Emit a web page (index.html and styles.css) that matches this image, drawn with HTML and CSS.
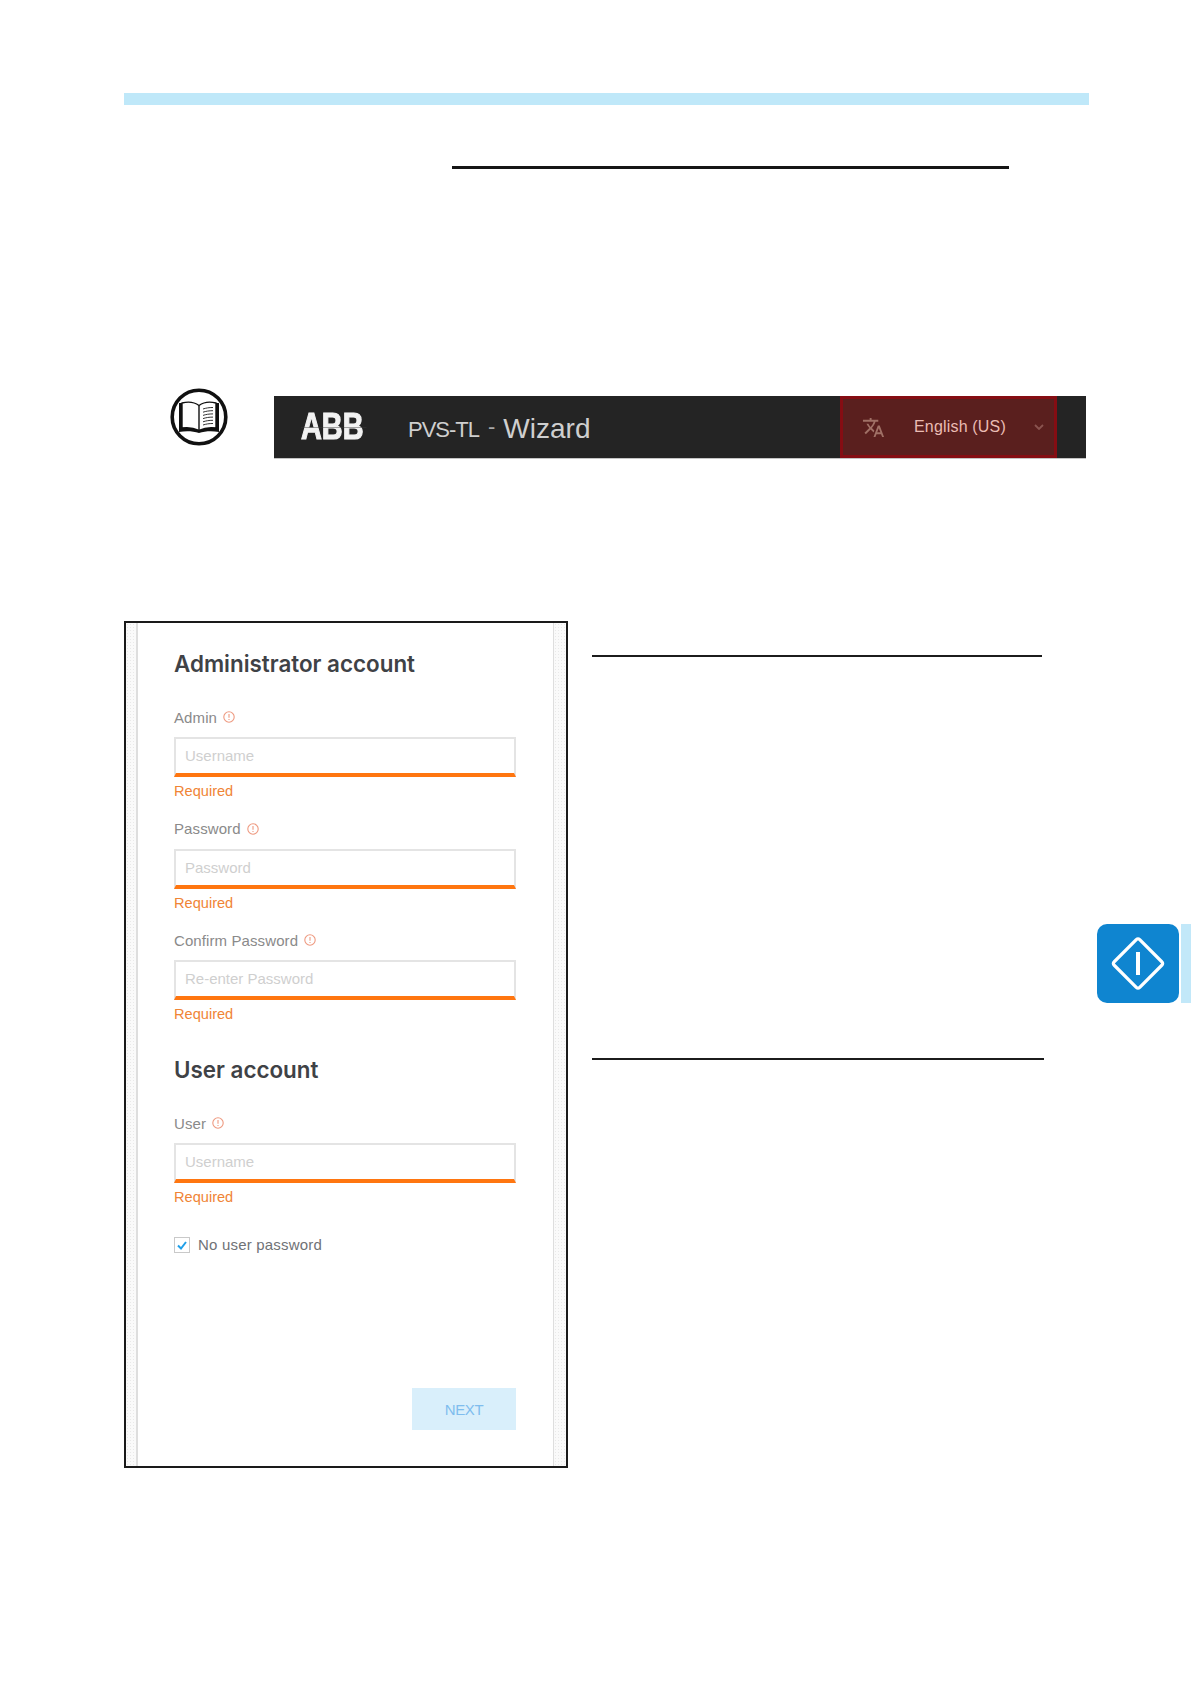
FILE: index.html
```html
<!DOCTYPE html>
<html lang="en">
<head>
<meta charset="utf-8">
<title>PVS-TL Wizard</title>
<link rel="stylesheet" href="styles.css">
</head>
<body>
<div class="band"></div>
<div class="title-rule"></div>

<div class="note-row">
  <svg class="book" viewBox="0 0 58 58" aria-hidden="true">
    <circle cx="29" cy="29" r="26.800" fill="#fff" stroke="#111" stroke-width="3.600"/>
    <g transform="translate(-1 0)">
      <path d="M10 15h3v25c6-1 12 0 17 2.500 5-2.500 11-3.500 17-2.500V15h3v29c-7-1.500-14-1-20 1-6-2-13-2.500-20-1z" fill="#111"/>
      <path d="M13 15c6-1.500 13-.5 17 2.500 4-3 11-4 17-2.500v25c-6-1-12 0-17 2.500-5-2.500-11-3.500-17-2.500z" fill="#fff" stroke="#111" stroke-width="1.400"/>
      <path d="M30 17.500v25" stroke="#111" stroke-width="1.400"/>
      <path d="M34 21c3-1 6-1.500 10-1.500M34 24.200c3-1 6-1.500 10-1.500M34 27.400c3-1 6-1.500 10-1.500M34 30.600c3-1 6-1.500 10-1.500M34 33.800c3-1 6-1.500 10-1.500M34 37c3-1 6-1.500 10-1.500" fill="none" stroke="#333" stroke-width="1"/>
    </g>
  </svg>
  <header class="topbar">
    <span class="logo">ABB</span>
    <span class="product">PVS-TL</span>
    <span class="dash">-</span>
    <span class="wizard">Wizard</span>
    <div class="lang">
      <svg class="lang-icon" viewBox="0 0 24 24" aria-hidden="true"><path d="M12.870 15.070l-2.540-2.510.03-.03c1.740-1.940 2.980-4.170 3.710-6.530H17V4h-7V2H8v2H1v1.990h11.170C11.500 7.920 10.440 9.750 9 11.350 8.070 10.320 7.300 9.190 6.690 8h-2c.73 1.630 1.730 3.170 2.980 4.560l-5.090 5.020L4 19l5-5 3.110 3.110.76-2.040zM18.500 10h-2L12 22h2l1.120-3h4.750L21 22h2l-4.500-12zm-2.620 7l1.620-4.330L19.120 17h-3.240z"/></svg>
      <span class="lang-name">English (US)</span>
      <svg class="lang-caret" viewBox="0 0 10 6" aria-hidden="true"><path d="M1 1l4 4 4-4" fill="none" stroke="#8a5450" stroke-width="1.800"/></svg>
    </div>
  </header>
</div>

<main class="content">
  <section class="card">
    <div class="strip strip-left"></div>
    <form class="panel">
      <h2 class="heading">Administrator account</h2>

      <div class="field">
        <div class="label">Admin <svg class="info" viewBox="0 0 12 12" aria-hidden="true"><circle cx="6" cy="6" r="5.200" fill="none" stroke="#ee9a80" stroke-width="1.100"/><path d="M6 3v3.700M6 8v1" stroke="#ee9a80" stroke-width="1.100"/></svg></div>
        <input class="input" type="text" placeholder="Username">
        <div class="error">Required</div>
      </div>

      <div class="field">
        <div class="label">Password <svg class="info" viewBox="0 0 12 12" aria-hidden="true"><circle cx="6" cy="6" r="5.200" fill="none" stroke="#ee9a80" stroke-width="1.100"/><path d="M6 3v3.700M6 8v1" stroke="#ee9a80" stroke-width="1.100"/></svg></div>
        <input class="input" type="text" placeholder="Password">
        <div class="error">Required</div>
      </div>

      <div class="field">
        <div class="label">Confirm Password <svg class="info" viewBox="0 0 12 12" aria-hidden="true"><circle cx="6" cy="6" r="5.200" fill="none" stroke="#ee9a80" stroke-width="1.100"/><path d="M6 3v3.700M6 8v1" stroke="#ee9a80" stroke-width="1.100"/></svg></div>
        <input class="input" type="text" placeholder="Re-enter Password">
        <div class="error">Required</div>
      </div>

      <h2 class="heading heading-second">User account</h2>

      <div class="field">
        <div class="label">User <svg class="info" viewBox="0 0 12 12" aria-hidden="true"><circle cx="6" cy="6" r="5.200" fill="none" stroke="#ee9a80" stroke-width="1.100"/><path d="M6 3v3.700M6 8v1" stroke="#ee9a80" stroke-width="1.100"/></svg></div>
        <input class="input" type="text" placeholder="Username">
        <div class="error">Required</div>
      </div>

      <div class="check-row">
        <span class="checkbox"><svg viewBox="0 0 14 14" aria-hidden="true"><path d="M3 7.500l3 3 5-6.500" fill="none" stroke="#1f9fe8" stroke-width="2"/></svg></span>
        <span class="check-label">No user password</span>
      </div>

      <button class="next" type="button">NEXT</button>
    </form>
    <div class="strip"></div>
  </section>

  <aside class="side">
    <div class="side-rule"></div>
    <div class="tab">
      <div class="tile">
        <svg viewBox="0 0 82 79" aria-hidden="true">
          <path d="M39.500 15.500a2 2 0 0 1 3 0L65 38a2 2 0 0 1 0 3L42.500 63.500a2 2 0 0 1-3 0L17 41a2 2 0 0 1 0-3z" fill="none" stroke="#fff" stroke-width="3.200"/>
          <rect x="39" y="28" width="4" height="23" fill="#fff"/>
        </svg>
      </div>
      <div class="tab-edge"></div>
    </div>
    <div class="side-rule side-rule-second"></div>
  </aside>
</main>
</body>
</html>
```
FILE: styles.css
```css
* { box-sizing: border-box; }

html, body { margin: 0; padding: 0; }

body {
  min-height: 1684px;
  padding-top: 93px;
  background: #fff;
  font-family: "Liberation Sans", Arial, sans-serif;
  overflow-x: hidden;
}

.band {
  height: 12px;
  margin: 0 102px 0 124px;
  background: #bfe8f9;
}

.title-rule {
  width: 557px;
  height: 3px;
  margin: 61px 0 0 452px;
  background: #151515;
}

.note-row {
  display: flex;
  align-items: flex-start;
  gap: 46px;
  margin-top: 219px;
  padding-left: 170px;
}

.book {
  flex: none;
  width: 58px;
  height: 58px;
}

.topbar {
  display: flex;
  align-items: center;
  width: 812px;
  height: 63px;
  margin-top: 8px;
  padding-left: 27px;
  background: #242424;
  border-bottom: 1px solid #c4c4c4;
  color: #cfcfcf;
}

.logo {
  position: relative;
  display: block;
  width: 63px;
  font-size: 37px;
  line-height: 40px;
  font-weight: 700;
  color: #f2f2f2;
  -webkit-text-stroke: 1.200px #f2f2f2;
  transform: scaleX(.78);
  transform-origin: left center;
  white-space: nowrap;
  filter: blur(.4px);
}

.logo::after {
  content: "";
  position: absolute;
  left: 0;
  top: 20px;
  width: 84px;
  height: 1px;
  background: rgba(60, 60, 60, .45);
}

.product {
  margin-left: 44px;
  font-size: 22px;
  letter-spacing: -1px;
  padding-top: 5px;
}

.dash {
  margin-left: 9px;
  font-size: 22px;
  color: #a8a8a8;
}

.wizard {
  margin-left: 8px;
  font-size: 28px;
  padding-top: 3px;
}

.lang {
  display: flex;
  align-items: center;
  align-self: stretch;
  width: 217px;
  margin-left: auto;
  margin-right: 29px;
  padding-left: 19px;
  background: #5a1f1e;
  border: 3px solid #850d13;
}

.lang-icon {
  flex: none;
  width: 23px;
  height: 23px;
  fill: #a07066;
}

.lang-name {
  margin-left: 29px;
  font-size: 16px;
  letter-spacing: .18px;
  color: #eabcb4;
}

.lang-caret {
  flex: none;
  width: 10px;
  height: 6px;
  margin-left: 28px;
}

.content {
  display: flex;
  align-items: flex-start;
  gap: 24px;
  margin-top: 162px;
  padding-left: 124px;
}

.card {
  display: flex;
  flex: none;
  width: 444px;
  height: 847px;
  border: 2px solid #1a1a1a;
}

.strip {
  flex: 1;
  background-color: #fafafa;
  background-image: radial-gradient(#e9e9e9 .6px, transparent .7px);
  background-size: 3px 3px;
}

.strip-left {
  flex: none;
  width: 10px;
}

.panel {
  display: flex;
  flex: none;
  flex-direction: column;
  width: 418px;
  padding: 26px 37px 36px 36px;
  background: #fff;
  border-left: 2px solid #dedede;
  border-right: 1px solid #dedede;
}

.heading {
  margin: 0 0 28px;
  font-family: Inter, "Liberation Sans", sans-serif;
  font-size: 22.400px;
  line-height: 30px;
  font-weight: 600;
  color: #3f4246;
}

.heading-second {
  margin-top: 13px;
  margin-bottom: 28px;
}

.field {
  margin-bottom: 17.700px;
}

.label {
  display: flex;
  align-items: center;
  gap: 6px;
  height: 20px;
  font-size: 15px;
  letter-spacing: .1px;
  color: #8a8a8a;
  white-space: nowrap;
}

.info {
  flex: none;
  width: 12px;
  height: 12px;
}

.input {
  display: block;
  width: 100%;
  height: 40px;
  margin: 10px 0 0;
  padding: 0 9px 1px;
  background: #fff;
  border: 2px solid #e4e4e4;
  border-bottom: 4px solid #ff7610;
  border-radius: 0;
  outline: 0;
  font-family: inherit;
  font-size: 15px;
  line-height: 20px;
}

.input::placeholder {
  color: #cfcfcf;
  opacity: 1;
}

.error {
  height: 20px;
  margin-top: 4px;
  font-size: 14.600px;
  line-height: 20px;
  color: #f08436;
}

.check-row {
  display: flex;
  align-items: center;
  gap: 8px;
  margin-top: 12px;
  height: 16px;
}

.checkbox {
  display: flex;
  flex: none;
  align-items: center;
  justify-content: center;
  width: 16px;
  height: 16px;
  border: 1px solid #c9c9c9;
}

.checkbox svg {
  display: block;
  width: 14px;
  height: 14px;
}

.check-label {
  font-size: 15px;
  letter-spacing: .2px;
  color: #6f7276;
  white-space: nowrap;
}

.next {
  width: 104px;
  height: 42px;
  margin-top: auto;
  align-self: flex-end;
  padding: 0;
  background: #d9effb;
  border: 0;
  border-radius: 0;
  font-family: inherit;
  font-size: 15px;
  letter-spacing: -.4px;
  color: #7fbdee;
}

.side {
  flex: 1;
  min-width: 0;
  padding-top: 34px;
}

.side-rule {
  width: 450px;
  height: 2px;
  background: #1c1c1c;
}

.side-rule-second {
  width: 452px;
  margin-top: 55px;
}

.tab {
  display: flex;
  gap: 2px;
  height: 79px;
  margin: 267px 0 0 505px;
}

.tile {
  flex: none;
  width: 82px;
  height: 79px;
  background: #0f85d0;
  border-radius: 10px;
}

.tile svg {
  display: block;
  width: 82px;
  height: 79px;
}

.tab-edge {
  width: 10px;
  background: #c2e8f9;
}
```
